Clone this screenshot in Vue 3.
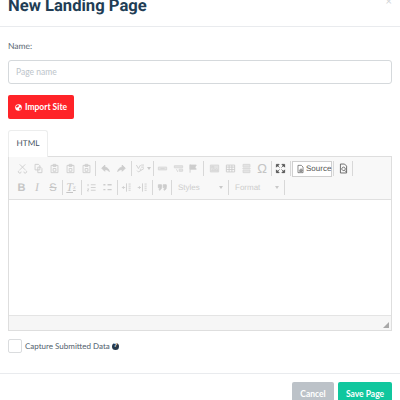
<template>
  <div class="modal">
    <header class="modal-header">
      <h2 class="title">New Landing Page</h2>
      <span class="close">×</span>
    </header>

    <section class="modal-body">
      <label class="field-label">Name:</label>
      <input class="name-input" type="text" placeholder="Page name">

      <button class="btn btn-import">
        <svg class="globe" viewBox="0 0 16 16">
          <circle cx="8" cy="8" r="7.5" fill="#fff" />
          <path d="M4 3.500l3-1 2 1-1 2.500-2.500 1-.5 2-2-1.500-1-1.500zM9 9l3.500-1 1.500 1-1.500 4-2 1-.5-2.500z" fill="#ff2328" />
        </svg>
        Import Site
      </button>

      <div class="tabs">
        <div class="tab">HTML</div>
      </div>

      <div class="editor">
        <div class="toolbar">
          <div v-for="(row, r) in rows" :key="r" class="tool-row">
            <template v-for="(item, i) in row" :key="i">
              <span v-if="item.sep" class="sep" :style="{ marginLeft: (item.ml ?? 1) + 'px', marginRight: (item.mr ?? 1) + 'px' }"></span>
              <span v-else-if="item.combo" class="combo" :style="{ width: item.w + 'px' }">
                {{ item.combo }}
                <i class="caret"></i>
              </span>
              <span v-else-if="item.source" class="source">
                <svg class="icon dark" viewBox="0 0 16 16"><path d="M3.500 1.500h6l3 3v10h-9zM6 10.500l3-3 2.500 3zM6 12.500h5" /></svg>
                Source
              </span>
              <span v-else-if="item.text" class="glyph" :class="item.cls" :style="{ width: item.w + 'px' }">{{ item.text }}<sub v-if="item.sub">x</sub></span>
              <span v-else class="cell" :style="{ width: item.w + 'px' }">
                <svg class="icon" :class="item.cls" viewBox="0 0 16 16"><path :d="item.d" /></svg>
                <i v-if="item.caret" class="caret small"></i>
              </span>
            </template>
          </div>
        </div>
        <div class="content"></div>
        <div class="status-bar">
          <svg class="resize" viewBox="0 0 8 8"><path d="M8 0v8H0z" /></svg>
        </div>
      </div>

      <div class="capture">
        <span class="checkbox"></span>
        <span class="capture-label">Capture Submitted Data</span>
        <span class="help">?</span>
      </div>
    </section>

    <footer class="modal-footer">
      <button class="btn btn-cancel">Cancel</button>
      <button class="btn btn-save">Save Page</button>
    </footer>
  </div>
</template>

<script setup>
const paste = 'M3 3.500h10V14H3zM6 2h4v3H6zM6 8h4v4H6z'

const rows = [
  [
    { w: 16, d: 'M4 2l8 8M12 2l-8 8M3 11a2 2 0 1 0 3 1.500M13 11a2 2 0 1 1-3 1.500' },
    { w: 16, d: 'M3 2h5l2 2v6H3zM7 6h4l2 2v6H7z' },
    { w: 16, d: paste },
    { w: 16, d: paste },
    { w: 16, d: paste },
    { sep: true },
    { w: 16.5, d: 'M7 3L2.500 7.500 7 12V9.500c3 0 5 1 6.500 3-.5-3.500-2.500-6-6.500-6.500z', cls: 'solid' },
    { w: 16.5, d: 'M9 3l4.500 4.500L9 12V9.500c-3 0-5 1-6.500 3 .5-3.500 2.500-6 6.500-6.500z', cls: 'solid' },
    { sep: true },
    { w: 19, d: 'M2 3l3 5 3-5M9 3h4M9 6h4M3 11l2 2 8-5M7 9h2', caret: true },
    { sep: true },
    { w: 15.5, d: 'M2 6h12v4H2zM5 8h6', cls: 'solid-ish' },
    { w: 15, d: 'M2 4h12v3H2zM9 9h5v3H9zM5 9l2 4', cls: 'solid-ish' },
    { w: 15.5, d: 'M3 2v12M3 3h9l-2 3 2 3H3z', cls: 'solid' },
    { sep: true, ml: 2, mr: 2 },
    { w: 16, d: 'M2 3h12v10H2zM4 11l3-3 2 2 2-2 2 3zM4 5h3v2H4z', cls: 'solid-ish' },
    { w: 16, d: 'M2 3h12v10H2zM2 6h12M2 9.500h12M6 3v10M10 3v10' },
    { w: 16, d: 'M3 2h10v4H3zM2 8h12M3 10h10v4H3z', cls: 'solid-ish' },
    { w: 16, text: 'Ω', cls: 'omega' },
    { sep: true, ml: 1, mr: 0 },
    { w: 17, d: 'M2 2h4L2 6zM14 2v4l-4-4zM2 14v-4l4 4zM14 14h-4l4-4zM4.500 4.500L6.500 6.500M11.500 4.500L9.500 6.500M4.500 11.500l2-2M11.500 11.500l-2-2', cls: 'dark solid-dark' },
    { sep: true, ml: 1, mr: 1 },
    { source: true },
    { sep: true, ml: 1, mr: 1 },
    { w: 16, d: 'M3.500 1.500h6l3 3v10h-9zM8 6a2.500 2.500 0 1 0 .1 0M9.500 10.500l2.500 2.500', cls: 'dark' },
    { sep: true, ml: 1 },
  ],
  [
    { w: 15, text: 'B', cls: 'bold' },
    { w: 16, text: 'I', cls: 'ital' },
    { w: 16, text: 'S', cls: 'strike' },
    { sep: true, mr: 0 },
    { w: 16, text: 'T', cls: 'ital under', sub: true },
    { sep: true, ml: 2 },
    { w: 16, d: 'M3 3v3M2 10h2l-2 3h2M7 4h7M7 8h7M7 12h7' },
    { w: 16, d: 'M2 4h3M2 11h3M8 4h6M8 11h6', cls: 'heavy' },
    { sep: true, ml: 2, mr: 0 },
    { w: 16, d: 'M2 8h4M4 6L2 8l2 2M8 2v12M11 3h3M11 6h3M11 9h3M11 12h3' },
    { w: 16, d: 'M1 8h4M3 6l2 2-2 2M8 2v12M11 3h3M11 6h3M11 9h3M11 12h3' },
    { sep: true, ml: 2 },
    { w: 17, d: 'M2 4h4.500v4c0 2-1 3.500-3 4l-.5-1.500c1-.3 1.500-1 1.500-2H2zM9 4h4.500v4c0 2-1 3.500-3 4l-.5-1.500c1-.3 1.500-1 1.500-2H9z', cls: 'solid' },
    { sep: true, ml: 0, mr: 0 },
    { combo: 'Styles', w: 56 },
    { sep: true, ml: 0, mr: 0 },
    { combo: 'Format', w: 55 },
    { sep: true, ml: 0 },
  ],
]
</script>

<style>
html, body {
  height: 400px;
  overflow: hidden;
  background: #fff;
}
</style>

<style scoped>
.modal {
  width: 400px;
  height: 400px;
  overflow: hidden;
  font-family: Lato, "Open Sans", sans-serif;
  color: #5a6873;
  text-rendering: geometricPrecision;
}
.modal-header {
  height: 27px;
  box-sizing: border-box;
  border-bottom: 1px solid #e9ebee;
  padding: 0 8px;
  display: flex;
  justify-content: space-between;
  overflow: hidden;
}
.title {
  margin: -3.500px 0 0;
  font-family: Roboto, sans-serif;
  font-size: 16.600px;
  line-height: 20px;
  font-weight: 700;
  color: #213d55;
  white-space: nowrap;
}
.close {
  margin: -5px 0 0;
  color: #d0d3d6;
  font-size: 11px;
  line-height: 14px;
}
.modal-body {
  height: 346px;
  box-sizing: border-box;
  padding: 13px 8px 0;
}
.field-label {
  display: block;
  font-size: 8.500px;
  line-height: 13px;
  height: 20px;
}
.name-input {
  display: block;
  box-sizing: border-box;
  width: 384px;
  height: 24px;
  padding: 0 7px;
  border: 1px solid #d5d9dc;
  border-radius: 3px;
  font: 8.500px Lato, sans-serif;
  outline: none;
}
.name-input::placeholder {
  color: #bcc4ca;
}
.btn {
  border: none;
  border-radius: 2px;
  color: #fff;
  font: 700 8.500px Lato, sans-serif;
  padding: 0;
}
.btn-import {
  display: flex;
  align-items: center;
  justify-content: center;
  gap: 3px;
  margin-top: 11px;
  width: 66px;
  height: 24px;
  background: #ff2328;
}
.globe {
  width: 7px;
  height: 7px;
}
.tabs {
  margin-top: 11px;
  display: flex;
}
.tab {
  width: 40px;
  height: 27px;
  box-sizing: border-box;
  border: 1px solid #eceded;
  border-bottom: none;
  border-radius: 3px 3px 0 0;
  text-align: center;
  font-size: 8.200px;
  line-height: 25px;
  color: #46535f;
  position: relative;
  z-index: 1;
  background: #fff;
  margin-bottom: -1px;
}
.editor {
  width: 384px;
  border: 1px solid #dedede;
  box-sizing: border-box;
}
.toolbar {
  height: 43px;
  box-sizing: border-box;
  background: #f8f8f8;
  border-bottom: 1px solid #e0e0e0;
  padding: 2px 0 0 5px;
}
.tool-row {
  height: 19px;
  display: flex;
  align-items: center;
}
.cell,
.glyph {
  display: flex;
  align-items: center;
  justify-content: center;
  height: 16px;
  flex: none;
}
.icon {
  width: 11px;
  height: 11px;
  flex: none;
  fill: none;
  stroke: #cdcdcd;
  stroke-width: 1.300;
}
.icon.solid {
  fill: #cdcdcd;
}
.icon.solid-ish {
  fill: #e4e4e4;
  stroke: #d6d6d6;
}
.icon.dark {
  stroke: #555;
  stroke-width: 1.200;
}
.icon.solid-dark {
  fill: #444;
}
.icon.heavy {
  stroke-width: 2;
}
.caret {
  width: 0;
  height: 0;
  border: 2.500px solid transparent;
  border-top: 3px solid #c9c9c9;
  border-bottom: none;
}
.caret.small {
  margin-left: 1px;
}
.sep {
  width: 1px;
  height: 15px;
  flex: none;
  background: #d8d8d8;
}
.glyph {
  font: 11px "Liberation Sans", sans-serif;
  color: #c5c5c5;
}
.glyph sub {
  font-size: 6px;
}
.glyph.bold {
  font-weight: 700;
}
.glyph.ital {
  font-style: italic;
  font-family: "Liberation Serif", serif;
  font-size: 12px;
}
.glyph.strike {
  text-decoration: line-through;
}
.glyph.under {
  text-decoration: underline;
}
.glyph.omega {
  font-size: 13px;
}
.source {
  display: flex;
  align-items: center;
  gap: 1px;
  box-sizing: border-box;
  width: 40px;
  height: 16px;
  flex: none;
  padding-left: 3px;
  background: #fff;
  border: 1px solid #cfcfcf;
  font: 8px "Liberation Sans", sans-serif;
  color: #555;
}
.source .icon {
  width: 9px;
  height: 10px;
}
.combo {
  display: flex;
  align-items: center;
  justify-content: space-between;
  box-sizing: border-box;
  height: 16px;
  flex: none;
  padding: 0 5px 0 6px;
  font: 8px "Liberation Sans", sans-serif;
  color: #cdcdcd;
}
.content {
  height: 115px;
  background: #fff;
}
.status-bar {
  height: 15px;
  box-sizing: border-box;
  background: #f6f6f6;
  border-top: 1px solid #e4e4e4;
  display: flex;
  justify-content: flex-end;
  align-items: flex-end;
  padding: 0 2px 2px 0;
}
.resize {
  width: 6px;
  height: 6px;
  fill: #a8a8a8;
}
.capture {
  display: flex;
  align-items: center;
  margin-top: 8px;
  height: 14px;
}
.checkbox {
  box-sizing: border-box;
  width: 14px;
  height: 14px;
  border: 1px solid #dadcde;
  border-radius: 2px;
  margin-right: 3px;
}
.capture-label {
  font-size: 8px;
  color: #52616e;
}
.help {
  width: 7px;
  height: 7px;
  margin-left: 2px;
  border-radius: 50%;
  background: #27394b;
  color: #fff;
  font: 700 6px/7px "Liberation Sans", sans-serif;
  text-align: center;
}
.modal-footer {
  height: 27px;
  box-sizing: border-box;
  border-top: 1px solid #e9ebee;
  padding: 8px 8px 0 0;
  display: flex;
  justify-content: flex-end;
  gap: 4px;
}
.modal-footer .btn {
  height: 24px;
  flex: none;
}
.btn-cancel {
  width: 42px;
  background: #bcc2c8;
}
.btn-save {
  width: 54px;
  background: #10c79e;
}
</style>
